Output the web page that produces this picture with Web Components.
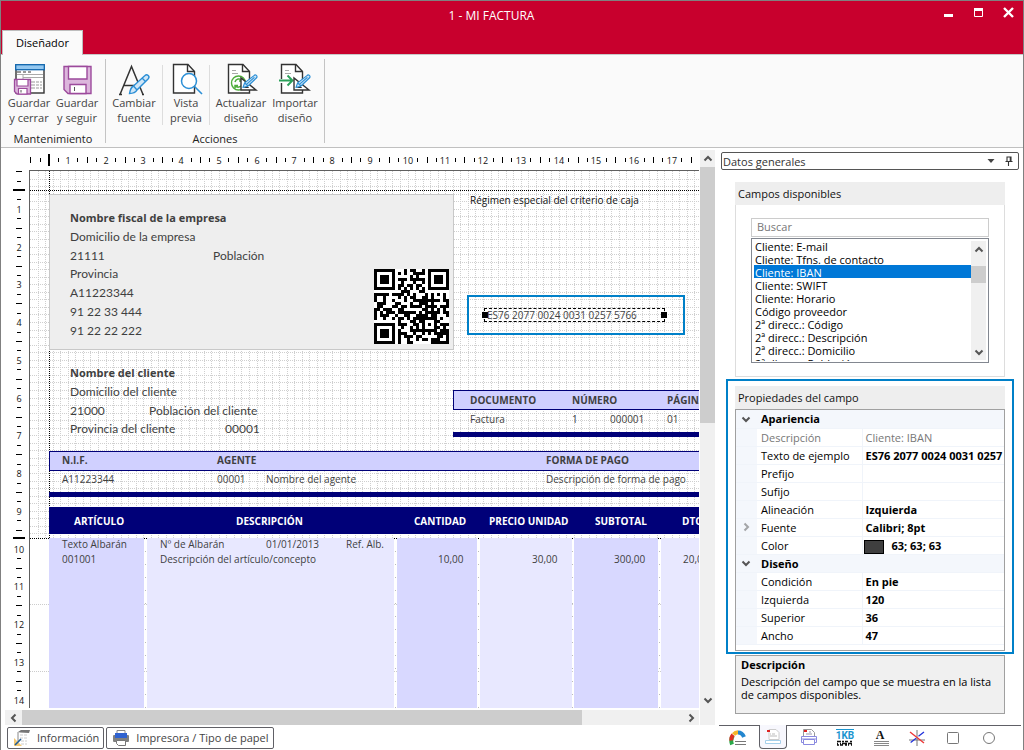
<!DOCTYPE html>
<html lang="es">
<head>
<meta charset="utf-8">
<title>1 - MI FACTURA</title>
<style>
  html, body { margin: 0; height: 100%; }
  body { font-family: "Open Sans", "Noto Sans", sans-serif; font-size: 11px; color: #1e1e1e; background: #fff; }
</style>
</head>
<body>
<invoice-app></invoice-app>
<script>
const BASE = `*{box-sizing:border-box} button{font:inherit;color:inherit;background:none;border:0;padding:0;margin:0} svg{display:block}`;

class Part extends HTMLElement {
  connectedCallback() {
    if (this.shadowRoot) return;
    const root = this.attachShadow({ mode: 'open' });
    root.innerHTML = `<style>${BASE}${this.css()}</style>${this.html()}`;
  }
  css() { return ''; }
  html() { return '<slot></slot>'; }
}

/* ---------- icons ---------- */
const pencil = (x, y) => `<g transform="translate(${x} ${y})" fill="#cfe6f7" stroke="#2b8fd6" stroke-width="1.2" stroke-linejoin="round"><path d="M0 12.5l1.6-4.6L11 .6a1.7 1.7 0 0 1 2.6 2.2L5 11z"/><path d="M1.6 7.9L5 11M3.4 9.4L11.4 2.4" fill="none"/></g>`;
const page = `<path d="M1.5 1.5h14.5l6.500 7v21.500h-21z" fill="#fff" stroke="#333" stroke-width="1.4"/><path d="M15.500 1.500v7h7" fill="none" stroke="#333" stroke-width="1.4"/>`;
const square = `<path d="M14 15v12h15z" fill="#fff" stroke="#333" stroke-width="1.400"/><path d="M17.500 21v3.500h4z" fill="#fff" stroke="#333"/>`;
const ICONS = {
  saveClose: ['0 0 32 32', `<rect x="3" y="2" width="28" height="28" fill="#fff" stroke="#333" stroke-width="1.4"/><rect x="2.700" y="1.700" width="28.600" height="5" fill="#94c8f0" stroke="#1268b0" stroke-width="1.300"/><path d="M4 9h4m2 0h3m2 0h3" stroke="#333"/><path d="M4 11.500h26M10 11v5M10 14.500h20" stroke="#aaa"/><path d="M18 19h4m1 0h3m1 0h2M18 22h4m1 0h3m1 0h2M18 25h4m1 0h3m1 0h2" stroke="#999"/><path d="M1.500 16.500h16v14.500h-13.500l-2.500-2.500z" fill="#dcb6dc" stroke="#9c4a9c" stroke-width="1.300"/><path d="M4 16.500h11v6.500h-11zM5.500 31v-5.500h8.500v5.500z" fill="#fff" stroke="#9c4a9c" stroke-width="1.200"/><path d="M8 27v2.500" stroke="#555"/>`],
  save: ['0 0 32 32', `<path d="M3 3.500h27v27h-23l-4-4z" fill="#dcb6dc" stroke="#9c4a9c" stroke-width="1.400"/><path d="M7.500 3.500h18.500v12.500h-18.500zM9 30.500v-9h16v9z" fill="#fff" stroke="#9c4a9c" stroke-width="1.400"/><path d="M13.500 24v4" stroke="#555"/>`],
  font: ['0 0 32 32', `<path d="M1 31.500h3M24 31.500h2M2 31.500L13.500 3.500l11.500 28M6 22.500h15" fill="none" stroke="#333" stroke-width="1.500"/><g fill="#cfe6f7" stroke="#2b8fd6" stroke-width="1.400"><path d="M11.500 30.500c.5-3 1-6 4-7.500l11.500-10.500a2.300 2.300 0 0 1 3.300 3.200L19 27c-1.500 2.700-4.500 3.500-7.500 3.500z"/><path d="M15.500 23l3.500 4M24 15l3.500 3.500" fill="none"/></g>`],
  preview: ['0 0 32 32', `<g transform="translate(2 0)">${page}</g><circle cx="19" cy="18" r="7.500" fill="#fff" stroke="#2b8fd6" stroke-width="1.500"/><path d="M24.500 23.500l7.500 7.500" stroke="#2b8fd6" stroke-width="1.600"/>`],
  update: ['0 0 32 32', `<g transform="translate(2 0)">${page}<path d="M5 7.500h4m-4 3h6" stroke="#aaa"/><circle cx="11.500" cy="20" r="7" fill="#fff" stroke="#4fae3c" stroke-width="1.400"/><path d="M8 19a4 4 0 0 1 7-1.500M15 15v3h-3M15 21.500a4 4 0 0 1-7 1M8 25.500v-3h3" fill="none" stroke="#4fae3c" stroke-width="1.500"/>${square}${pencil(16, 12)}</g>`],
  import: ['0 0 32 32', `<g transform="translate(1 0)">${page}<path d="M5 7.500h4m-4 3h6" stroke="#aaa"/><path d="M-1 18h12.500M7.500 13l5 5-5 5" fill="none" stroke="#fff" stroke-width="4"/><path d="M-1 17.500h12.500M7.500 12.500l5 5-5 5" fill="none" stroke="#2ba05a" stroke-width="1.900"/>${square}${pencil(16, 12)}</g>`],
  info: ['0 0 18 18', `<path d="M5 3l3-2h9l-1 3-9-.5z" fill="#777"/><path d="M5 3v9" stroke="#888"/><path d="M7 6h7M7 9h7M8 12h6M8 15h6" stroke="#ccc" stroke-dasharray="3 1"/><path d="M1 9v8h8z" fill="#f3c873"/><path d="M2 16l6-6" stroke="#1d5a96" stroke-width="1.600"/>`],
  printer: ['0 0 18 18', `<path d="M5 4V1.500h8V4" fill="#fff" stroke="#888"/><rect x="1" y="6" width="16" height="7" rx="1" fill="#808080"/><rect x="3" y="4" width="12" height="5" fill="#2f62d0"/><path d="M4.500 11.500h9v5h-7l-2-2z" fill="#fff" stroke="#777"/>`],
  gauge: ['0 0 18 18', `<path d="M3 15.500c-1.200-3-.8-6.500 1-9" fill="none" stroke="#2aa84a" stroke-width="4"/><path d="M2.300 11.500c-.2-2 .4-4 1.700-5.700" fill="none" stroke="#e03020" stroke-width="4"/><path d="M4.500 5.500c1.200-1.500 3-2.300 4.500-2.300" fill="none" stroke="#f5b62a" stroke-width="4"/><path d="M9 3.500c3 0 5 2 6 4.500" fill="none" stroke="#2386cf" stroke-width="4"/><path d="M6 12.500h11M6 15.500h11" stroke="#777"/>`],
  report: ['0 0 18 18', `<path d="M5 1.500h7l3 3v7H5z" fill="#fff" stroke="#ccc"/><path d="M3 2h3v2h-3z" fill="#d22"/><path d="M6 6h1M8 6h3M6 8h7" stroke="#bbb"/><path d="M1.500 12.500h15v3h-15z" fill="#fff" stroke="#a5cfea"/>`],
  print: ['0 0 18 18', `<path d="M3.500 7V.5h8l3 3V7" fill="#fff" stroke="#999"/><path d="M4 1h3v2h-3z" fill="#d22"/><path d="M9 3h2M6 5h6" stroke="#99a"/><path d="M1.500 7.500h15v6h-15z" fill="#fff" stroke="#8a8ae0"/><path d="M3.500 10.500h11v5h-11zM2 10h14" fill="#fff" stroke="#8a8ae0"/>`],
  kb: ['0 0 18 18', `<path d="M0 .5h18" stroke="#1b95d0"/><text x="9" y="10" font-family="Roboto" font-weight="700" font-size="10" fill="#1b95d0" text-anchor="middle">1KB</text><path d="M1 12.500h4m1 0h2m1 0h3m2 0h2M1 14.500h1m2 0h1m1 0h5m1 0h4M1 16h2m1 0h3m2 0h2m1 0h1m2 0h1" stroke="#111" stroke-width="1.700"/>`],
  letter: ['0 0 18 18', `<text x="8" y="10" font-family="Liberation Serif" font-weight="700" font-size="12" fill="#111" text-anchor="middle">A</text><path d="M2 12.500h15M2 14.500h15M2 16.500h15" stroke="#888"/>`],
  lines: ['0 0 18 18', `<path d="M9 1v16M1 11h16" stroke="#777"/><path d="M2 3l14 11" stroke="#e33" stroke-width="1.300"/><path d="M16 3L2 14" stroke="#23d" stroke-width="1.300" stroke-dasharray="7 3"/>`],
  rect: ['0 0 18 18', `<rect x="3.500" y="3.500" width="11" height="11" rx="1" fill="#fff" stroke="#777"/>`],
  circle: ['0 0 18 18', `<circle cx="9" cy="9" r="5.500" fill="#fff" stroke="#777"/>`],
  min: ['0 0 10 10', `<path d="M0 7.500h9" stroke="#fff" stroke-width="3"/>`],
  max: ['0 0 10 10', `<path d="M.5 .5h8v8h-8z" fill="none" stroke="#fff"/><path d="M0 1.500h9" stroke="#fff" stroke-width="3"/>`],
  close: ['0 0 10 10', `<path d="M0 0l9 9M9 0l-9 9" stroke="#fff" stroke-width="2.400"/>`],
  up: ['0 0 10 10', `<path d="M1.500 6.500L5 3l3.500 3.500" fill="none" stroke="#555" stroke-width="2"/>`],
  down: ['0 0 10 10', `<path d="M1.500 3.500L5 7l3.500-3.500" fill="none" stroke="#555" stroke-width="2"/>`],
  left: ['0 0 10 10', `<path d="M6.500 1.500L3 5l3.500 3.500" fill="none" stroke="#555" stroke-width="2"/>`],
  right: ['0 0 10 10', `<path d="M3.500 1.500L7 5l-3.500 3.500" fill="none" stroke="#555" stroke-width="2"/>`],
  caret: ['0 0 10 10', `<path d="M1.500 3h7L5 7z" fill="#444"/>`],
  pin: ['0 0 10 10', `<path d="M3 5.500V1h4v4.500M1.500 5.500h7M4.500 5.500V10" fill="none" stroke="#333" stroke-width="1.100"/><path d="M6.300 1v4.500" stroke="#333" stroke-width="1.200"/>`]
};
customElements.define('ui-icon', class extends Part {
  css() { return `:host{display:block;flex:none;width:${this.getAttribute('size')}px;height:${this.getAttribute('size')}px} svg{width:100%;height:100%;overflow:visible}`; }
  html() { const [box, art] = ICONS[this.getAttribute('name')]; return `<svg viewBox="${box}" aria-hidden="true">${art}</svg>`; }
});

/* ---------- title bar and ribbon ---------- */
customElements.define('title-bar', class extends Part {
  css() { return `:host{display:grid;grid-template-rows:29px 24px;background:#c8002d;color:#fff}
    .top{display:grid;grid-template-columns:80px 1fr 121px;align-items:center;text-align:center}
    .name{font-size:12px;line-height:16px}
    .win{display:flex;justify-content:flex-end;gap:20px;padding:0 9px 6px 0}
    .tab{justify-self:start;width:81px;margin-left:1px;padding-bottom:2px;background:#fafafa;color:#000;border:1px solid #bdbdbd;border-bottom:0;height:25px;position:relative}`; }
  html() { return `<div class="top"><span></span><span class="name">1 - MI FACTURA</span><div class="win">
    <button aria-label="Minimizar"><ui-icon name="min" size="10"></ui-icon></button><button aria-label="Maximizar"><ui-icon name="max" size="10"></ui-icon></button><button aria-label="Cerrar"><ui-icon name="close" size="10"></ui-icon></button></div></div>
    <button class="tab">Diseñador</button>`; }
});
customElements.define('ribbon-button', class extends Part {
  css() { return `:host{display:block} button{width:100%;display:grid;justify-items:center;text-align:center;line-height:15px;white-space:nowrap;color:#444}`; }
  html() { return `<button><ui-icon name="${this.getAttribute('icon')}" size="32"></ui-icon><span><slot></slot></span></button>`; }
});
customElements.define('ribbon-group', class extends Part {
  css() { return `:host{display:grid;grid-template-rows:1fr 11px;border-right:1px solid #c4c4c4;margin:4px 0;padding-top:4px}
    .row{display:flex} .cap{text-align:center;line-height:14px;color:#222}`; }
  html() { return `<div class="row"><slot></slot></div><div class="cap">${this.getAttribute('caption')}</div>`; }
});
customElements.define('ribbon-bar', class extends Part {
  css() { return `:host{display:flex;height:94px;background:#fafafa;border-top:1px solid #c8c8c8;border-bottom:1px solid #c0c0c0}
    .first{padding-left:4px;padding-right:4px} .last{width:219px}
    .w46{width:46px}.w48{width:48px}.w56{width:56px}.w62{width:62px} .sep{width:1px;height:60px;margin-top:2px;background:#ddd}`; }
  html() { return `<ribbon-group class="first" caption="Mantenimiento"><ribbon-button class="w48" icon="saveClose">Guardar<br>y cerrar</ribbon-button><ribbon-button class="w48" icon="save">Guardar<br>y seguir</ribbon-button></ribbon-group>
    <ribbon-group class="last" caption="Acciones"><ribbon-button class="w56" icon="font">Cambiar<br>fuente</ribbon-button><div class="sep"></div><ribbon-button class="w46" icon="preview">Vista<br>previa</ribbon-button><div class="sep"></div><ribbon-button class="w62" icon="update">Actualizar<br>diseño</ribbon-button><ribbon-button class="w46" icon="import">Importar<br>diseño</ribbon-button></ribbon-group>`; }
});

/* ---------- rulers ---------- */
const CM = 37.75;
customElements.define('ruler-bar', class extends Part {
  css() { return `:host{display:block;overflow:hidden;background:#fff} svg{width:100%;height:100%} text{font-size:9px;fill:#111;text-anchor:middle}`; }
  html() {
    const vertical = this.hasAttribute('vertical'), origin = +this.getAttribute('origin'), band = +this.getAttribute('band');
    const cross = +this.getAttribute('cross'), last = +this.getAttribute('last') * 4;
    let out = '';
    const tick = (at, half, w) => { out += vertical ? `<rect x="${cross - half}" y="${at - (w >> 1)}" width="${half * 2}" height="${w}"/>` : `<rect x="${at - (w >> 1)}" y="${cross - half}" width="${w}" height="${half * 2}"/>`; };
    for (let k = -2; k <= last; k++) {
      const at = Math.round(origin + k * CM / 4);
      if (k === 0) tick(at, 6, 2);
      else if (band && Math.abs(at - band) < 2) continue;
      else if (k % 4 === 0 || k === -2) tick(at, 3, 1);
      else if (k % 2) tick(at, 2, 1);
      else out += vertical ? `<text x="${cross}" y="${at + 4}">${(k + 2) / 4}</text>` : `<text x="${at}" y="${cross + 4}">${(k + 2) / 4}</text>`;
    }
    if (band) tick(band, 6, 2);
    return `<svg shape-rendering="crispEdges" aria-hidden="true">${out}</svg>`;
  }
});

/* ---------- QR code, version 2, byte mode ---------- */
function qrMatrix(text, level, mask) {
  const N = 25, [nd, ne, lv] = { L: [34, 10, 1], M: [28, 16, 0], Q: [22, 22, 3], H: [16, 28, 2] }[level];
  let bits = '0100' + text.length.toString(2).padStart(8, '0');
  for (const c of text) bits += c.charCodeAt(0).toString(2).padStart(8, '0');
  bits += '0000';
  while (bits.length % 8) bits += '0';
  const data = bits.match(/.{8}/g).map(b => parseInt(b, 2));
  for (let p = 0; data.length < nd; p++) data.push(p % 2 ? 0x11 : 0xec);
  const mul = (a, b) => { let r = 0; for (; b; b >>= 1) { if (b & 1) r ^= a; a <<= 1; if (a & 256) a ^= 0x11d; } return r; };
  let gen = [1];
  for (let i = 0, root = 1; i < ne; i++, root = mul(root, 2)) {
    const next = [...gen, 0];
    gen.forEach((g, j) => { next[j + 1] ^= mul(g, root); });
    gen = next;
  }
  const rem = [...data, ...Array(ne).fill(0)];
  for (let i = 0; i < nd; i++) { const f = rem[i]; gen.forEach((g, j) => { rem[i + j] ^= mul(g, f); }); }
  const stream = [...data, ...rem.slice(nd)].map(v => v.toString(2).padStart(8, '0')).join('');
  const m = Array.from({ length: N }, () => Array(N).fill(null));
  const finder = (r, c) => { for (let y = -1; y < 8; y++) for (let x = -1; x < 8; x++) if (m[r + y] && r + y >= 0 && c + x >= 0 && c + x < N) { const d = Math.max(Math.abs(y - 3), Math.abs(x - 3)); m[r + y][c + x] = d === 3 || d < 2 ? 1 : 0; } };
  finder(0, 0); finder(0, N - 7); finder(N - 7, 0);
  for (let i = 8; i < N - 8; i++) m[6][i] = m[i][6] = i % 2 ? 0 : 1;
  for (let y = -2; y < 3; y++) for (let x = -2; x < 3; x++) m[18 + y][18 + x] = Math.max(Math.abs(x), Math.abs(y)) === 1 ? 0 : 1;
  let f = (lv << 3 | mask), e = f << 10;
  for (let i = 14; i > 9; i--) if (e >> i & 1) e ^= 0x537 << (i - 10);
  f = (f << 10 | e) ^ 0x5412;
  const F = f.toString(2).padStart(15, '0').split('').map(Number);
  [0, 1, 2, 3, 4, 5, 7, 8].forEach((c, i) => { m[8][c] = F[i]; });
  [7, 5, 4, 3, 2, 1, 0].forEach((r, i) => { m[r][8] = F[8 + i]; });
  for (let i = 0; i < 7; i++) m[N - 1 - i][8] = F[i];
  for (let i = 0; i < 8; i++) m[8][N - 8 + i] = F[7 + i];
  m[N - 8][8] = 1;
  const rules = [(r, c) => (r + c) % 2, r => r % 2, (r, c) => c % 3, (r, c) => (r + c) % 3, (r, c) => ((r >> 1) + Math.floor(c / 3)) % 2, (r, c) => r * c % 2 + r * c % 3, (r, c) => (r * c % 2 + r * c % 3) % 2, (r, c) => ((r + c) % 2 + r * c % 3) % 2];
  let n = 0, up = true;
  for (let c = N - 1; c > 0; c -= 2, up = !up) {
    if (c === 6) c--;
    for (let i = 0; i < N; i++) for (const x of [c, c - 1]) {
      const r = up ? N - 1 - i : i;
      if (m[r][x] === null) m[r][x] = +(stream[n++] || 0) ^ (rules[mask](r, x) === 0 ? 1 : 0);
    }
  }
  return m;
}
customElements.define('qr-code', class extends Part {
  css() { return `:host{display:block;width:75px;height:75px;background:#fff} svg{width:100%;height:100%}`; }
  html() {
    const m = qrMatrix(this.getAttribute('value'), this.getAttribute('level'), +this.getAttribute('mask'));
    const d = m.map((row, y) => row.map((v, x) => v ? `M${x} ${y}h1v1h-1z` : '').join('')).join('');
    return `<svg viewBox="0 0 25 25" shape-rendering="crispEdges" role="img" aria-label="Código QR"><path d="${d}"/></svg>`;
  }
});

/* ---------- report sheet: a free canvas, item positions are its data ---------- */
const FIELDS = [
  // x, centre y, text, style
  [40, 48, 'Nombre fiscal de la empresa', 'b'], [40, 67, 'Domicilio de la empresa', 'n'], [40, 86, '21111', 'n'], [183, 86, 'Población', 'n'],
  [40, 104, 'Provincia', 'n'], [40, 123, 'A11223344', 'n'], [40, 142, '91 22 33 444', 'n'], [40, 161, '91 22 22 222', 'n'],
  [40, 203, 'Nombre del cliente', 'b'], [40, 222, 'Domicilio del cliente', 'n'], [40, 241, '21000', 'n'], [119, 241, 'Población del cliente', 'n'],
  [40, 259, 'Provincia del cliente', 'n'], [195, 259, '00001', 'n'],
  [440, 30, 'Régimen especial del criterio de caja', 's k'],
  [440, 230, 'DOCUMENTO', 's b'], [542, 230, 'NÚMERO', 's b'], [637, 230, 'PÁGINA', 's b'],
  [440, 249, 'Factura', 's'], [542, 249, '1', 's'], [580, 249, '000001', 's'], [637, 249, '01', 's'],
  [32, 290, 'N.I.F.', 's b'], [187, 290, 'AGENTE', 's b'], [516, 290, 'FORMA DE PAGO', 's b'],
  [32, 309, 'A11223344', 's'], [187, 309, '00001', 's'], [236, 309, 'Nombre del agente', 's'], [516, 309, 'Descripción de forma de pago', 's'],
  [44, 351, 'ARTÍCULO', 's b w'], [206, 351, 'DESCRIPCIÓN', 's b w'], [384, 351, 'CANTIDAD', 's b w'], [459, 351, 'PRECIO UNIDAD', 's b w'], [565, 351, 'SUBTOTAL', 's b w'], [652, 351, 'DTO.', 's b w'],
  [32, 374, 'Texto Albarán', 's'], [130, 374, 'Nº de Albarán', 's'], [236, 374, '01/01/2013', 's'], [316, 374, 'Ref. Alb.', 's'],
  [32, 389, '001001', 's'], [130, 389, 'Descripción del artículo/concepto', 's'], [408, 389, '10,00', 's'], [502, 389, '30,00', 's'], [584, 389, '300,00', 's'], [653, 389, '20,00', 's']
];
customElements.define('report-sheet', class extends Part {
  css() { return `:host{display:block;position:relative;overflow:hidden;background:#fff;border-top:1px solid #606060;border-left:1px solid #606060}
    .grid{position:absolute;inset:0;width:100%;height:100%}
    .box,.f,qr-code{position:absolute}
    .f{line-height:16px;margin-top:-9px;white-space:nowrap;color:#3f3f3f}
    .n{font-family:Lato,"Open Sans",sans-serif;font-size:12px} .s{font-size:10px} .b{font-weight:700} .k{color:#111} .w{color:#fff}
    .company{left:19px;top:23px;width:405px;height:156px;background:#eee;border:1px solid #c8c8c8}
    .head{background:#d0d0ff;border:1px solid #000078;height:20px} .bar{background:#000078;height:5px} .titles{background:#000078;height:27px}
    .full{left:19px;right:0} .doc{left:423px;right:0} .head{border-right:0}
    .col{top:367px;bottom:0;background:#d8d8ff} .col.alt{background:#e8e8ff}
    .hint{left:437px;top:124px;width:218px;height:40px;border:2px solid #0080c8}
    .sel{left:454px;top:137px;width:181px;height:14px;border:1px dashed #000}
    .sel::before,.sel::after{content:"";position:absolute;top:3px;width:6px;height:6px;background:#000}
    .sel::before{left:-3px}.sel::after{right:-3px}
    .sel span{position:absolute;left:2px;top:-2px;line-height:16px;white-space:nowrap;color:#3f3f3f;font-size:10px}`; }
  html() {
    let g = '';
    const line = (x1, y1, x2, y2, c, dash) => `<path d="M${x1} ${y1}L${x2} ${y2}" stroke="${c}" stroke-dasharray="${dash}"/>`;
    for (let i = 1; i < 300; i++) { const p = Math.round(i * CM / 5) + .5; g += line(p, 0, p, 367, '#cfcfcf', '1 1'); if (p < 366) g += line(0, p, 2400, p, '#cfcfcf', '1 1'); }
    g += line(0, 433.5, 2400, 433.5, '#ccc', '1 1') + line(0, 500.5, 2400, 500.5, '#ccc', '1 1');
    for (const x of [115.5, 365.5, 448.5, 542.5, 629.5]) g += line(x, 380, x, 900, '#bbb', '1 12');
    g += line(19.5, 0, 19.5, 367, '#000', '1 1') + line(0, 19.5, 2400, 19.5, '#000', '1 1') + line(0, 367.5, 2400, 367.5, '#000', '1 1');
    const cols = [[19, 95], [117, 247, 1], [367, 80], [450, 92, 1], [544, 84], [631, 95, 1]];
    return `<svg class="grid" shape-rendering="crispEdges" aria-hidden="true">${g}</svg>
      <div class="box company"></div><qr-code style="left:344px;top:98px" value="https://www.sdelsol.com" level="L" mask="2"></qr-code>
      <div class="box head doc" style="top:219px"></div><div class="box bar doc" style="top:261px"></div>
      <div class="box head full" style="top:280px"></div><div class="box bar full" style="top:321px"></div>
      <div class="box titles full" style="top:336px"></div>
      ${cols.map(([x, w, alt]) => `<div class="box col${alt ? ' alt' : ''}" style="left:${x}px;width:${w}px"></div>`).join('')}
      ${FIELDS.map(([x, y, t, c]) => `<div class="f ${c || ''}" style="left:${x}px;top:${y}px">${t}</div>`).join('')}
      <div class="box hint"></div><div class="box sel"><span>ES76 2077 0024 0031 0257 5766</span></div>`;
  }
});

/* ---------- scroll bar ---------- */
customElements.define('scroll-bar', class extends Part {
  css() {
    const v = this.hasAttribute('vertical');
    return `:host{display:flex;flex-direction:${v ? 'column' : 'row'};background:#f0f0f0;${v ? 'width' : 'height'}:15px}
      button{flex:none;width:${v ? 15 : 17}px;height:${v ? 17 : 15}px;display:grid;place-items:center}
      .pre{flex:0 0 ${this.getAttribute('offset') || 0}px} .thumb{flex:0 0 ${this.getAttribute('thumb')};background:#cdcdcd} .rest{flex:1}`;
  }
  html() {
    const [a, b] = this.hasAttribute('vertical') ? ['up', 'down'] : ['left', 'right'];
    return `<button aria-label="Retroceder"><ui-icon name="${a}" size="10"></ui-icon></button><div class="pre"></div><div class="thumb"></div><div class="rest"></div><button aria-label="Avanzar"><ui-icon name="${b}" size="10"></ui-icon></button>`;
  }
});

customElements.define('status-button', class extends Part {
  css() { return `:host{display:block} button{display:flex;align-items:center;gap:6px;height:22px;padding:0 4px 1px 5px;border:1px solid #606066;border-radius:2px;background:#fff;color:#444;white-space:nowrap}`; }
  html() { return `<button><ui-icon name="${this.getAttribute('icon')}" size="18"></ui-icon><span><slot></slot></span></button>`; }
});

customElements.define('design-area', class extends Part {
  css() { return `:host{display:grid;grid-template-columns:28px minmax(0,1fr) 16px;grid-template-rows:22px minmax(0,1fr) 17px 25px;min-width:0}
    .h{grid-column:1/3} .v{grid-row:2} .vs{grid-column:3;grid-row:1/4;margin:2px 0 0 1px;padding-bottom:17px}
    .hs{grid-column:1/3;grid-row:3;margin:2px 0 0 4px}
    report-sheet{grid-column:2;grid-row:2} .foot{grid-column:1/4;display:flex;gap:2px;padding:2px 0 0 6px}`; }
  html() { return `<ruler-bar class="h" origin="48" cross="12" last="17"></ruler-bar><scroll-bar class="vs" vertical thumb="256px"></scroll-bar>
    <ruler-bar class="v" vertical origin="20" band="368" cross="18" last="14"></ruler-bar><report-sheet></report-sheet>
    <scroll-bar class="hs" thumb="560px"></scroll-bar>
    <div class="foot"><status-button icon="info">Información</status-button><status-button icon="printer">Impresora / Tipo de papel</status-button></div>`; }
});

/* ---------- side pane ---------- */
customElements.define('side-panel', class extends Part {
  css() { return `:host{display:block} h2{margin:0;font-size:11px;font-weight:400;line-height:23px;padding-left:3px;background:#eee;color:#111}`; }
  html() { return `<section><h2>${this.getAttribute('heading')}</h2><slot></slot></section>`; }
});
customElements.define('field-picker', class extends Part {
  css() { return `:host{display:grid;gap:1px;padding:13px 15px;border:1px solid #ddd;border-top:0}
    input{width:100%;height:19px;border:1px solid #ccc;padding:0 5px 2px;font:inherit;margin:0;color:#222;outline:0} input::placeholder{color:#777}
    .list{display:flex;height:125px;border:1px solid #828790;padding:0 2px 1px}
    select{flex:1;min-width:0;height:122px;appearance:none;border:0;padding:0;margin:0;font:inherit;overflow:hidden;background:#fff;outline:0;border-radius:0;scrollbar-width:none}
    scroll-bar{margin:2px 0 1px}
    option{height:13px;min-height:13px;line-height:12px;padding:0 1px;color:#000}
    option:checked{background:#0078d7 linear-gradient(#0078d7,#0078d7);color:#fff;-webkit-text-fill-color:#fff}`; }
  html() {
    const items = ['Cliente: E-mail', 'Cliente: Tfns. de contacto', 'Cliente: IBAN', 'Cliente: SWIFT', 'Cliente: Horario', 'Código proveedor', '2ª direcc.: Código', '2ª direcc.: Descripción', '2ª direcc.: Domicilio', '2ª direcc.: Población'];
    return `<input type="text" placeholder="Buscar" aria-label="Buscar"><div class="list"><select size="9" aria-label="Campos disponibles">${items.map((t, i) => `<option${i === 2 ? ' selected' : ''}>${t}</option>`).join('')}</select><scroll-bar vertical offset="8" thumb="17px"></scroll-bar></div>`;
  }
});
customElements.define('property-grid', class extends Part {
  css() { return `:host{display:block;border:1px solid #a0a0a0;background:#fff;padding-bottom:5px;overflow:hidden}
    table{border-collapse:collapse;table-layout:fixed;width:100%;color:#000} td,th{height:18px;padding:0 0 0 4px;line-height:17px;text-align:left;font-weight:400;white-space:nowrap;overflow:hidden;border-bottom:1px solid #f0f4fa}
    .g{width:21px;background:#f4f7fc;padding:0 0 0 5px} .n{width:105px} td.v{font-weight:700;border-left:1px solid #f0f4fa;padding-left:3px}
    .cat th{font-weight:700;background:#f4f7fc} .off,.off td.v{color:#777;font-weight:400} .dim{opacity:.5}
    .sw{display:inline-block;width:20px;height:14px;background:#3f3f3f;border:1px solid #000;vertical-align:middle;margin:0 8px 0 -2px}`; }
  html() {
    const rows = [['#', 'Apariencia'], ['Descripción', 'Cliente: IBAN', 'off'], ['Texto de ejemplo', 'ES76 2077 0024 0031 0257 5766'], ['Prefijo', ''], ['Sufijo', ''], ['Alineación', 'Izquierda'], ['Fuente', 'Calibri; 8pt', 'exp'], ['Color', '<span class="sw"></span>63; 63; 63'], ['#', 'Diseño'], ['Condición', 'En pie'], ['Izquierda', '120'], ['Superior', '36'], ['Ancho', '47']];
    return `<table><colgroup><col style="width:21px"><col style="width:105px"><col></colgroup>${rows.map(([n, v, c]) => n === '#'
      ? `<tr class="cat"><td class="g"><ui-icon name="down" size="10"></ui-icon></td><th colspan="2">${v}</th></tr>`
      : `<tr class="${c || ''}"><td class="g">${c === 'exp' ? '<ui-icon class="dim" name="right" size="10"></ui-icon>' : ''}</td><th class="n" scope="row">${n}</th><td class="v">${v}</td></tr>`).join('')}</table>`;
  }
});
customElements.define('side-tabs', class extends Part {
  css() { return `:host{display:flex;height:25px;border-top:1px solid #606066;margin:0 2px 0 1px;padding-left:1px}
    button{height:23px;width:36px;display:grid;place-items:center}
    .on{width:28px;margin:-1px 4px 0 3px;height:24px;border:1px solid #606066;border-top:0;border-radius:0 0 4px 4px;background:#f7f7fd}`; }
  html() { return [['gauge', 'Gráficos'], ['report', 'Datos generales'], ['print', 'Impresión'], ['kb', 'Código'], ['letter', 'Texto'], ['lines', 'Líneas'], ['rect', 'Rectángulo'], ['circle', 'Elipse']].map(([n, label]) => `<button aria-label="${label}"${n === 'report' ? ' class="on"' : ''}><ui-icon name="${n}" size="18"></ui-icon></button>`).join(''); }
});
customElements.define('side-pane', class extends Part {
  css() { return `:host{display:flex;flex-direction:column;padding-top:4px}
    .title{display:flex;align-items:center;gap:8px;height:18px;line-height:15px;margin:0 4px 0 3px;padding:0 4px 0 1px;border:1px solid #555;border-radius:2px;color:#333}
    .title span{flex:1}
    .a{margin:12px 18px 0 17px} .mark{margin:2px 9px 0 8px;padding:5px 7px 1px;border:2px solid #0080c8}
    .desc{margin:1px 18px 0 17px;height:59px;padding:1px 5px;border:1px solid #a0a0a0;background:#f0f0f0;line-height:13px;color:#000} .desc b{display:block;line-height:15px;margin-bottom:3px}
    .desc p{margin:0} side-tabs{margin-top:auto}`; }
  html() { return `<div class="title"><span>Datos generales</span><button aria-label="Cambiar panel"><ui-icon name="caret" size="10"></ui-icon></button><button aria-label="Fijar panel"><ui-icon name="pin" size="10"></ui-icon></button></div>
    <side-panel class="a" heading="Campos disponibles"><field-picker></field-picker></side-panel>
    <div class="mark"><side-panel heading="Propiedades del campo"><property-grid></property-grid></side-panel></div>
    <div class="desc"><b>Descripción</b><p>Descripción del campo que se muestra en la lista<br>de campos disponibles.</p></div>
    <side-tabs></side-tabs>`; }
});

customElements.define('invoice-app', class extends Part {
  css() { return `:host{display:grid;grid-template-rows:auto auto minmax(0,1fr);height:100vh;min-height:700px;border:1px solid #808080;border-bottom:0;box-sizing:border-box;background:#fff}
    main{display:grid;grid-template-columns:minmax(0,1fr) 305px;column-gap:3px}`; }
  html() { return `<title-bar></title-bar><ribbon-bar></ribbon-bar><main><design-area></design-area><side-pane></side-pane></main>`; }
});
</script>
</body>
</html>
